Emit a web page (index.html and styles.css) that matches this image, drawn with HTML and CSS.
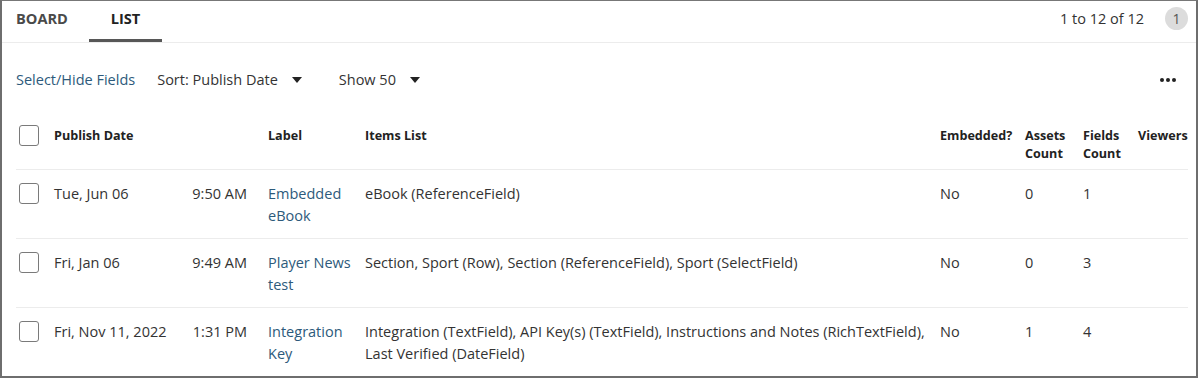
FILE: index.html
```html
<!DOCTYPE html>
<html>
<head>
<meta charset="utf-8">
<link rel="stylesheet" href="styles.css">
</head>
<body>
<div class="frame">
  <div class="tabbar">
    <div class="tabs">
      <div class="tab">BOARD</div>
      <div class="tab active">LIST</div>
    </div>
    <div class="pager">
      <span class="range">1 to 12 of 12</span>
      <span class="page-badge">1</span>
    </div>
  </div>
  <div class="toolbar">
    <a class="link">Select/Hide Fields</a>
    <div class="dropdown sort">Sort: Publish Date <span class="caret"></span></div>
    <div class="dropdown show">Show 50 <span class="caret"></span></div>
    <div class="more"><span></span><span></span><span></span></div>
  </div>
  <table class="grid">
    <colgroup>
      <col class="c-check"><col class="c-date"><col class="c-time"><col class="c-label"><col class="c-items"><col class="c-emb"><col class="c-assets"><col class="c-fields"><col class="c-viewers">
    </colgroup>
    <thead>
      <tr>
        <th class="check"><span class="box"></span></th>
        <th colspan="2">Publish Date</th>
        <th>Label</th>
        <th>Items List</th>
        <th>Embedded?</th>
        <th>Assets Count</th>
        <th>Fields Count</th>
        <th>Viewers</th>
      </tr>
    </thead>
    <tbody>
      <tr>
        <td class="check"><span class="box"></span></td>
        <td>Tue, Jun 06</td>
        <td class="time">9:50 AM</td>
        <td><a class="link">Embedded eBook</a></td>
        <td>eBook (ReferenceField)</td>
        <td>No</td>
        <td>0</td>
        <td>1</td>
        <td></td>
      </tr>
      <tr>
        <td class="check"><span class="box"></span></td>
        <td>Fri, Jan 06</td>
        <td class="time">9:49 AM</td>
        <td><a class="link">Player News test</a></td>
        <td>Section, Sport (Row), Section (ReferenceField), Sport (SelectField)</td>
        <td>No</td>
        <td>0</td>
        <td>3</td>
        <td></td>
      </tr>
      <tr>
        <td class="check"><span class="box"></span></td>
        <td>Fri, Nov 11, 2022</td>
        <td class="time">1:31 PM</td>
        <td><a class="link">Integration Key</a></td>
        <td>Integration (TextField), API Key(s) (TextField), Instructions and Notes (RichTextField), Last Verified (DateField)</td>
        <td>No</td>
        <td>1</td>
        <td>4</td>
        <td></td>
      </tr>
    </tbody>
  </table>
</div>
</body>
</html>
```
FILE: styles.css
```css
* { box-sizing: border-box; }
html, body { margin: 0; padding: 0; background: #fff; }
body {
  font-family: "Open Sans", "Noto Sans", sans-serif;
  font-size: 14.5px;
  color: #333;
}
.frame {
  width: 1198px;
  height: 378px;
  border-top: 1px solid #777;
  border-left: 2px solid #6e6e6e;
  border-right: 2px solid #6e6e6e;
  border-bottom: 2px solid #6e6e6e;
  overflow: hidden;
}
.tabbar {
  display: flex;
  justify-content: space-between;
  align-items: stretch;
  height: 42px;
  border-bottom: 1px solid #ececec;
}
.tabs { display: flex; padding-left: 14px; }
.tab {
  font-weight: 700;
  font-size: 14.6px;
  color: #4a4a4a;
  padding: 7px 0 0;
  line-height: 20px;
  width: 73px;
}
.tab.active {
  color: #222;
  border-bottom: 3px solid #575757;
  text-align: center;
}
.pager {
  display: flex;
  align-items: center;
  padding: 0 8px 6px 0;
  gap: 21px;
}
.range { color: #333; }
.page-badge {
  width: 23px;
  height: 23px;
  border-radius: 50%;
  background: #dcdcdc;
  color: #555;
  display: flex;
  align-items: center;
  justify-content: center;
  font-size: 14px;
}
.toolbar {
  display: flex;
  align-items: center;
  height: 74px;
  padding: 0 0 1px 14px;
}
.link { color: #2d5a7b; }
.dropdown {
  display: flex;
  align-items: center;
  color: #333;
}
.sort { margin-left: 22px; }
.show { margin-left: 37px; }
.caret {
  display: inline-block;
  width: 0; height: 0;
  border-left: 5px solid transparent;
  border-right: 5px solid transparent;
  border-top: 6px solid #222;
  margin-left: 14px;
}
.more {
  margin-left: auto;
  margin-right: 20px;
  display: flex;
  gap: 2px;
}
.more span {
  width: 4px; height: 4px;
  border-radius: 50%;
  background: #222;
}
.grid {
  margin-left: 14px;
  width: 1172px;
  table-layout: fixed;
  border-collapse: collapse;
}
.c-check { width: 38px; }
.c-date { width: 131px; }
.c-time { width: 83px; }
.c-label { width: 97px; }
.c-items { width: 575px; }
.c-emb { width: 85px; }
.c-assets { width: 58px; }
.c-fields { width: 55px; }
.c-viewers { width: 50px; }
th {
  text-align: left;
  font-weight: 700;
  font-size: 12.6px;
  line-height: 18px;
  color: #222;
  vertical-align: top;
  padding: 10px 8px 6px 0;
  border-bottom: 1px solid #ececec;
}
th:last-child { padding-right: 0; }
td {
  vertical-align: top;
  padding: 13px 10px 11px 0;
  line-height: 22px;
  border-bottom: 1px solid #ececec;
}
td.time { text-align: right; padding-right: 21px; }
.check { padding-left: 3px; padding-right: 0; }
th.check { padding-top: 8px; }
td.check { padding-top: 13px; }
.box {
  display: block;
  width: 20px;
  height: 21px;
  border: 1px solid #7a7a7a;
  border-radius: 3px;
  background: #fff;
}
```
